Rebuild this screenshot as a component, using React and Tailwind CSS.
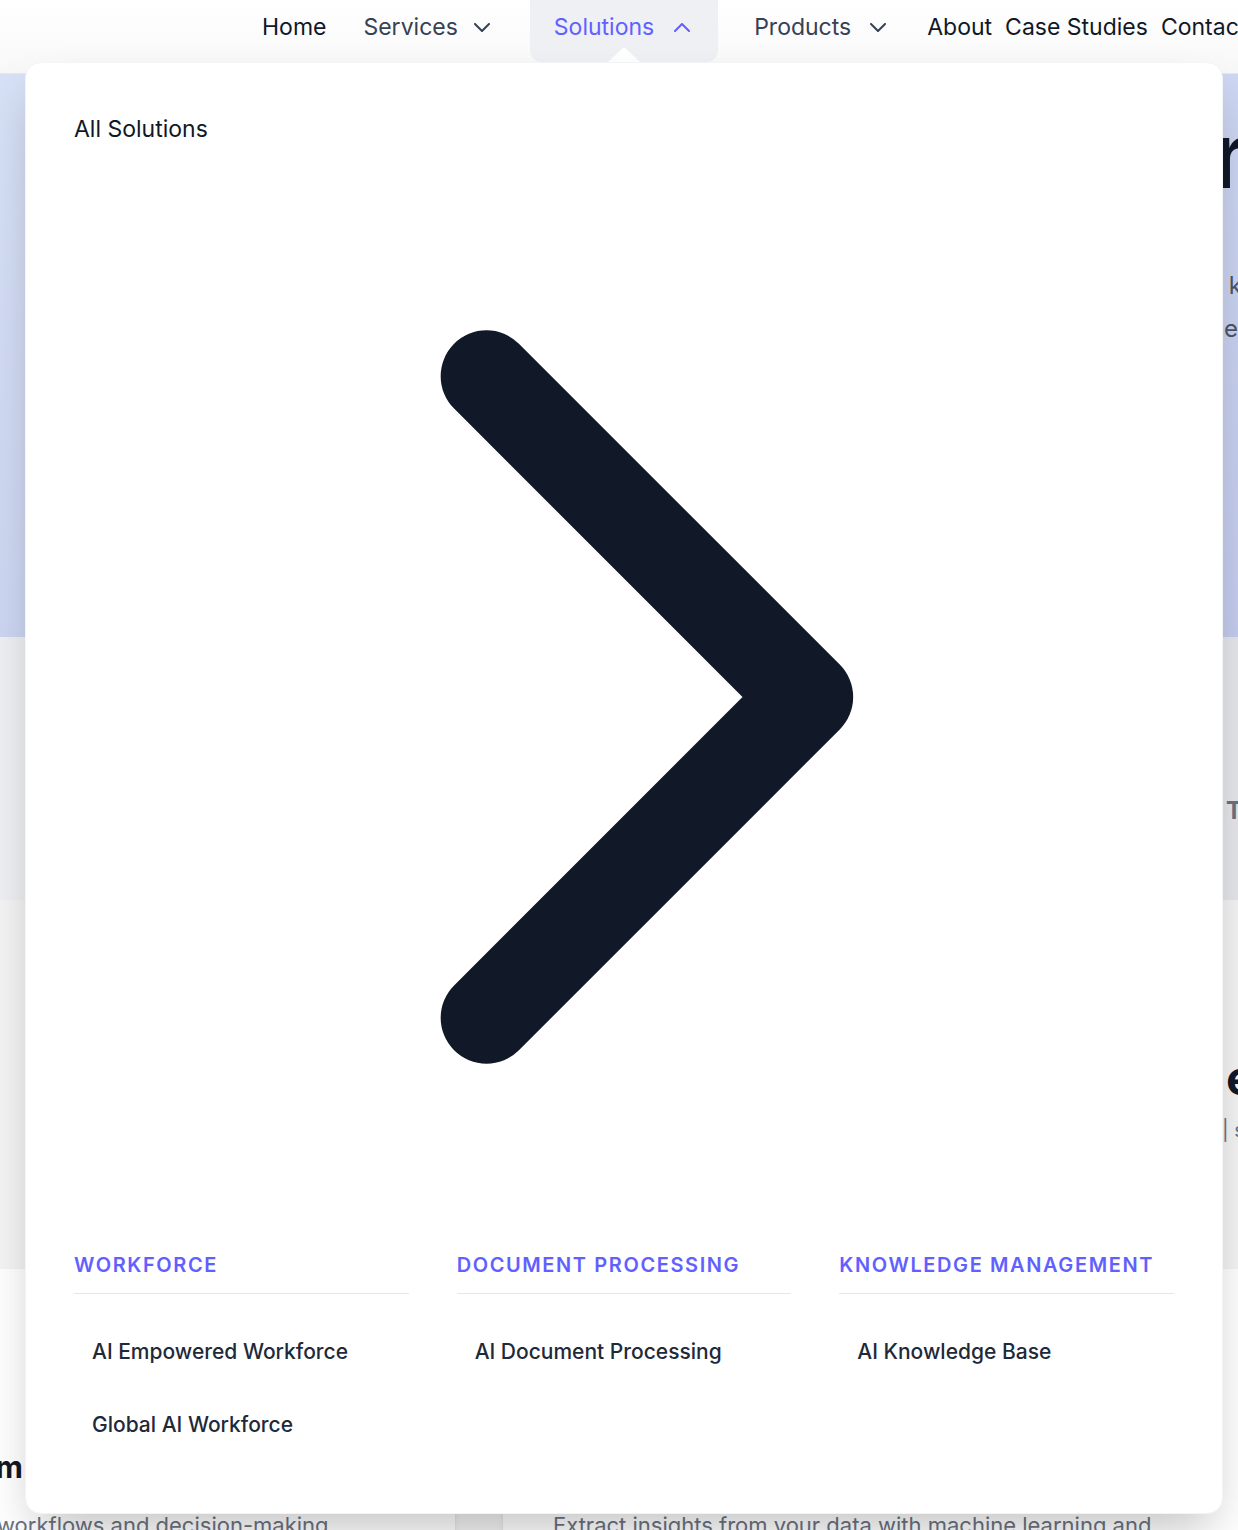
const columns = [
  { title: 'Workforce', items: ['AI Empowered Workforce', 'Global AI Workforce'] },
  { title: 'Document Processing', items: ['AI Document Processing'] },
  { title: 'Knowledge Management', items: ['AI Knowledge Base'] },
];

function Chevron({ up = false, className = '' }) {
  return (
    <svg width="16" height="9" viewBox="0 0 16 9" fill="none" stroke="currentColor" strokeWidth="2" className={className}>
      <path d={up ? 'M1 8l7-7 7 7' : 'M1 1l7 7 7-7'} strokeLinecap="round" strokeLinejoin="round" />
    </svg>
  );
}

function Header() {
  return (
    <header className="h-[74px] border-b border-gray-200 bg-gradient-to-b from-white to-[#f8f8f9] flex items-start pl-[262px] whitespace-nowrap text-[23px] relative z-10">
      <a className="h-[54px] flex items-center text-gray-900">Home</a>
      <button className="ml-[13px] h-[54px] px-6 flex items-center text-gray-700">
        Services
        <Chevron className="ml-4" />
      </button>
      {/* Active dropdown trigger */}
      <button className="ml-4 h-[62px] pl-6 pr-7 pb-[8px] flex items-center rounded-b-xl bg-[#eff0f3] text-indigo-500 relative">
        Solutions
        <Chevron up className="ml-5" />
        <span className="absolute left-[78px] bottom-0 w-0 h-0 border-x-[16px] border-x-transparent border-b-[15px] border-b-white" />
      </button>
      <button className="ml-3 h-[54px] px-6 flex items-center text-gray-700">
        Products
        <Chevron className="ml-[19px]" />
      </button>
      <a className="ml-[17px] h-[54px] flex items-center text-gray-900">About</a>
      <a className="ml-[13px] h-[54px] flex items-center text-gray-900">Case Studies</a>
      <a className="ml-[13px] h-[54px] flex items-center text-gray-900">Contact</a>
    </header>
  );
}

function MegaMenu() {
  return (
    <div className="absolute left-[25px] top-[62px] w-[1198px] bg-white rounded-2xl border border-gray-100 shadow-2xl px-12 pt-[51px] pb-[52px] z-20">
      <a className="block text-[23px] leading-[30px] text-gray-900">All Solutions</a>
      {/* unsized chevron icon */}
      <svg className="mt-[3px] w-full block" viewBox="0 0 24 24" fill="none" stroke="#111827" strokeWidth="2">
        <path d="M9 5l7 7-7 7" strokeLinecap="round" strokeLinejoin="round" />
      </svg>
      <div className="grid grid-cols-3 gap-12 mt-1">
        {columns.map((col) => (
          <div key={col.title}>
            <h3 className="text-xl leading-7 font-semibold uppercase tracking-[0.08em] text-indigo-500 pb-[14px] border-b border-gray-200">
              {col.title}
            </h3>
            <ul className="mt-[22px] flex flex-col gap-px">
              {col.items.map((item) => (
                <li key={item}>
                  <a className="block px-[18px] py-[22px] text-[21px] leading-7 font-medium text-gray-800">{item}</a>
                </li>
              ))}
            </ul>
          </div>
        ))}
      </div>
    </div>
  );
}

function Background() {
  return (
    <main className="whitespace-nowrap">
      <section className="h-[563px] bg-gradient-to-br from-[#d7e1f6] to-[#c4ccee] pt-[31px]">
        <div className="flex justify-end">
          <h1 className="-mr-[30px] text-[92px] leading-[100px] font-bold text-gray-900">AI Solution</h1>
        </div>
        <div className="mt-[59px] flex flex-col items-end text-2xl leading-[43px] text-gray-600">
          <p className="-mr-[4px]">Unlock growth with AI that works k</p>
          <p>Automate, analyze and scale with e</p>
        </div>
      </section>
      <section className="h-[263px] bg-gradient-to-r from-[#eef0f3] to-[#e6e7ea] pt-[158px] pl-[1226px]">
        <p className="text-2xl font-bold text-gray-500">TRUSTED</p>
      </section>
      <section className="bg-[#f4f4f5] pt-[150px] relative">
        <h2 className="pl-[1226px] text-5xl leading-[56px] font-bold text-gray-900">ex</h2>
        <p className="pl-[1222px] mt-[10px] text-xl text-gray-500">| s</p>
        <div className="mt-[125px] grid grid-cols-[455px_1fr] gap-12">
          <div className="bg-white shadow-md rounded-r-xl pt-[180px]">
            <div className="w-[23px] flex justify-end">
              <p className="text-3xl font-bold text-gray-900">AI Platform</p>
            </div>
            <div className="mt-[24px] -ml-[3px]">
              <p className="text-[22px] text-gray-500">workflows and decision-making</p>
            </div>
          </div>
          <div className="bg-white shadow-md rounded-l-xl pt-[240px] pl-[50px]">
            <p className="text-[22px] text-gray-500">Extract insights from your data with machine learning and</p>
          </div>
        </div>
      </section>
    </main>
  );
}

export default function App() {
  return (
    <div className="relative w-[1238px] h-[1530px] overflow-hidden bg-[#f4f4f5] font-['Inter',sans-serif]">
      <Header />
      <Background />
      <MegaMenu />
    </div>
  );
}
